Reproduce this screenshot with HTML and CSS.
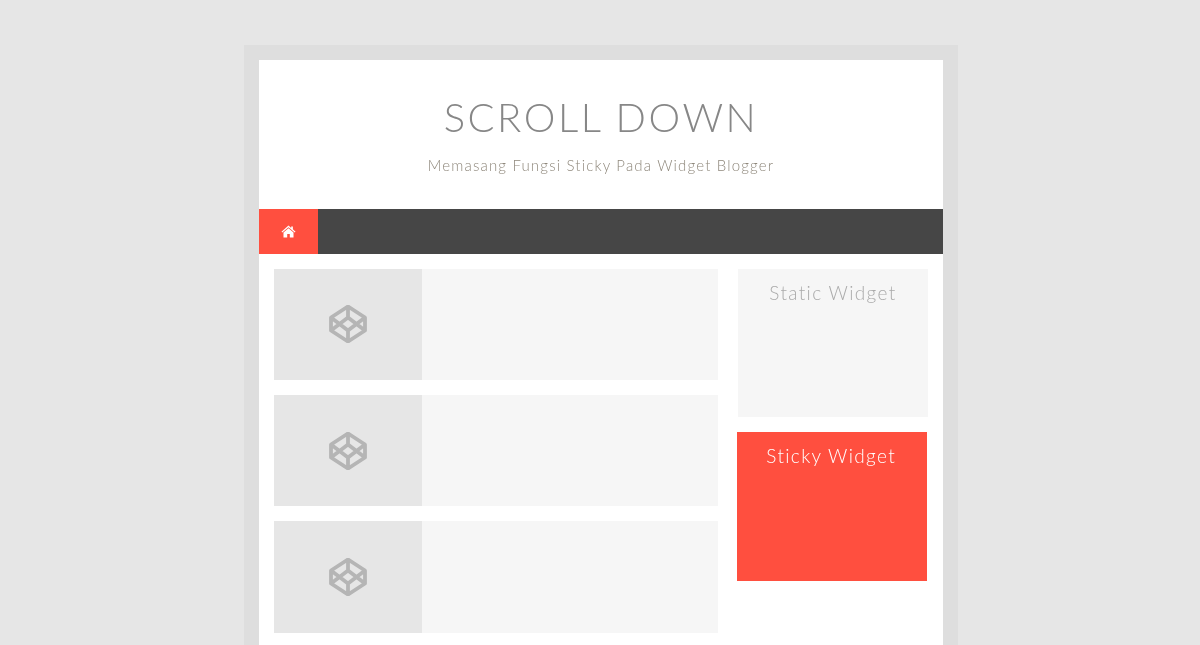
FILE: index.html
```html
<!DOCTYPE html>
<html lang="id">
<head>
    <meta charset="UTF-8">
    <meta name="viewport" content="width=device-width, initial-scale=1.0">
    <title>Scroll Down</title>
    <link rel="stylesheet" href="styles.css">
</head>
<body>
    <div class="wrapper">
        <div class="container">
            <header class="site-header">
                <h1>SCROLL DOWN</h1>
                <p>Memasang Fungsi Sticky Pada Widget Blogger</p>
            </header>

            <nav class="menu">
                <a class="menu-home" href="#" aria-label="Home">
                    <svg class="home-icon" viewBox="0 0 16 14" aria-hidden="true">
                        <path d="M8 0.6 L10.9 3.1 V1.6 H12.7 V4.7 L15.6 7.2 L14.7 8.2 L8 2.5 L1.3 8.2 L0.4 7.2 Z"/>
                        <path d="M8 3.6 L13.4 8.2 V13.4 H9.4 V9.6 H6.6 V13.4 H2.6 V8.2 Z"/>
                    </svg>
                </a>
            </nav>

            <div class="content">
                <main class="posts">
                    <article class="post">
                        <div class="thumb">
                            <svg class="codepen" viewBox="0 0 38 38" aria-hidden="true">
                                <path d="M19 1.5 L36 12.5 V25.5 L19 36.5 L2 25.5 V12.5 Z M19 1.5 V12.5 M19 25.5 V36.5 M2 12.5 L19 25.5 L36 12.5 M2 25.5 L19 12.5 L36 25.5"/>
                            </svg>
                        </div>
                    </article>
                    <article class="post">
                        <div class="thumb">
                            <svg class="codepen" viewBox="0 0 38 38" aria-hidden="true">
                                <path d="M19 1.5 L36 12.5 V25.5 L19 36.5 L2 25.5 V12.5 Z M19 1.5 V12.5 M19 25.5 V36.5 M2 12.5 L19 25.5 L36 12.5 M2 25.5 L19 12.5 L36 25.5"/>
                            </svg>
                        </div>
                    </article>
                    <article class="post">
                        <div class="thumb">
                            <svg class="codepen" viewBox="0 0 38 38" aria-hidden="true">
                                <path d="M19 1.5 L36 12.5 V25.5 L19 36.5 L2 25.5 V12.5 Z M19 1.5 V12.5 M19 25.5 V36.5 M2 12.5 L19 25.5 L36 12.5 M2 25.5 L19 12.5 L36 25.5"/>
                            </svg>
                        </div>
                    </article>
                </main>

                <aside class="sidebar">
                    <div class="widget">
                        <h3>Static Widget</h3>
                    </div>
                    <div class="widget sticky">
                        <h3>Sticky Widget</h3>
                    </div>
                </aside>
            </div>
        </div>
    </div>
</body>
</html>
```

FILE: styles.css
```css
html, body {
    height: 100%;
}

body {
    font-family: 'Lato', 'Open Sans', sans-serif;
    background: #e6e6e6;
    margin: 0;
    padding: 45px 0 0 1px;
    box-sizing: border-box;
    overflow: hidden;
}

.wrapper {
    width: 684px;
    margin: 0 auto;
    border: 15px solid #dedede;
    border-bottom: none;
}

.container {
    background: #fff;
}

.site-header {
    height: 149px;
    box-sizing: border-box;
    padding-top: 33px;
    text-align: center;
    will-change: transform;
}

.site-header h1 {
    margin: 0;
    font-size: 40px;
    line-height: 48px;
    font-weight: 300;
    color: #878787;
    letter-spacing: 2.5px;
}

.site-header p {
    margin: 15px 0 0;
    font-size: 15px;
    line-height: 18px;
    font-weight: 300;
    color: #8f887c;
    letter-spacing: 1.18px;
}

.menu {
    height: 44.5px;
    background: #464646;
    display: flex;
}

.menu-home {
    width: 59px;
    background: #ff4f3f;
    display: flex;
    align-items: center;
    justify-content: center;
}

.home-icon {
    width: 15px;
    height: 13px;
    fill: #fff;
}

.content {
    display: flex;
    justify-content: space-between;
    padding: 15px;
}

.posts {
    width: 444px;
    display: flex;
    flex-direction: column;
    gap: 15px;
}

.post {
    height: 111.4px;
    background: #f6f6f6;
}

.thumb {
    width: 148px;
    height: 100%;
    background: #e6e6e6;
    display: flex;
    align-items: center;
    justify-content: center;
}

.codepen {
    width: 38px;
    height: 38px;
    fill: none;
    stroke: #b5b5b5;
    stroke-width: 3.8;
    stroke-linejoin: round;
}

.sidebar {
    width: 190px;
    display: flex;
    flex-direction: column;
    gap: 15px;
}

.widget {
    height: 148.5px;
    box-sizing: border-box;
    padding-top: 12px;
    background: #f6f6f6;
}

.widget h3 {
    margin: 0;
    color: #aaa;
    font-size: 19px;
    line-height: 23px;
    font-weight: 300;
    letter-spacing: 1.35px;
    text-align: center;
    will-change: transform;
}

.sticky {
    height: 149px;
    width: 189.5px;
    margin-left: -0.5px;
    padding-right: 1px;
    background: #ff4f3f;
}

.sticky h3 {
    color: #fff;
}
```
